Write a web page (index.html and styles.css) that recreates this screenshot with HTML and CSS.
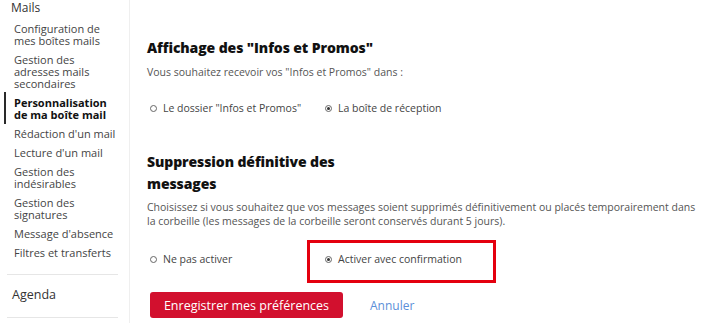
FILE: index.html
```html
<!DOCTYPE html>
<html lang="fr">
<head>
<meta charset="utf-8">
<title>Personnalisation de ma boîte mail</title>
<link rel="stylesheet" href="styles.css">
</head>
<body>
<div class="layout">
  <aside class="sidebar">
    <div class="group-title">Mails</div>
    <ul class="menu">
      <li>Configuration de mes boîtes mails</li>
      <li>Gestion des adresses mails secondaires</li>
      <li class="active">Personnalisation de ma boîte mail</li>
      <li>Rédaction d'un mail</li>
      <li>Lecture d'un mail</li>
      <li>Gestion des indésirables</li>
      <li>Gestion des signatures</li>
      <li>Message d'absence</li>
      <li>Filtres et transferts</li>
    </ul>
    <hr class="sep">
    <div class="group-title agenda">Agenda</div>
    <hr class="sep sep-last">
  </aside>
  <main class="content">
    <section class="pref">
      <h2 class="pref-title">Affichage des "Infos et Promos"</h2>
      <p class="pref-desc">Vous souhaitez recevoir vos "Infos et Promos" dans :</p>
      <div class="options">
        <label class="option"><span class="radio"></span>Le dossier "Infos et Promos"</label>
        <label class="option"><span class="radio checked"></span>La boîte de réception</label>
      </div>
    </section>
    <section class="pref pref-second">
      <h2 class="pref-title narrow">Suppression définitive des messages</h2>
      <p class="pref-desc">Choisissez si vous souhaitez que vos messages soient supprimés définitivement ou placés temporairement dans la corbeille (les messages de la corbeille seront conservés durant 5 jours).</p>
      <div class="options options-second">
        <label class="option"><span class="radio"></span>Ne pas activer</label>
        <label class="option highlighted"><span class="radio checked"></span>Activer avec confirmation</label>
      </div>
    </section>
    <div class="actions">
      <button class="btn-primary" type="button">Enregistrer mes préférences</button>
      <a class="link-cancel" href="#">Annuler</a>
    </div>
  </main>
</div>
</body>
</html>
```

FILE: styles.css
```css
* { box-sizing: border-box; }

html, body {
  margin: 0;
  padding: 0;
  background: #ffffff;
  overflow: hidden;
}

body {
  font-family: "Open Sans", "DejaVu Sans", sans-serif;
  color: #3a3a3a;
  width: 711px;
  height: 323px;
}

.layout {
  display: flex;
  height: 323px;
}

.sidebar {
  width: 130px;
  flex: 0 0 130px;
  border-right: 1px solid #efefef;
  padding: 1px 11px 0 7px;
}

.group-title {
  font-size: 12px;
  line-height: 14px;
  color: #333;
  padding-left: 4px;
}

.menu {
  list-style: none;
  margin: 8px 0 0 0;
  padding: 0 0 0 7px;
  display: flex;
  flex-direction: column;
  gap: 7px;
}

.menu li {
  font-size: 11px;
  line-height: 12px;
  color: #444;
  position: relative;
}

.menu li.active {
  font-weight: 700;
  color: #111;
}

.menu li.active::before {
  content: "";
  position: absolute;
  left: -10px;
  top: -5px;
  bottom: -3px;
  width: 2px;
  background: #2a2a2a;
}

.sep {
  border: 0;
  border-top: 1px solid #e6e6e6;
  margin: 15px 0 0 0;
}

.agenda {
  margin-top: 13px;
  font-size: 12.5px;
  padding-left: 5px;
}

.sep-last {
  margin-top: 15px;
}

.content {
  flex: 1;
  padding: 37px 14px 0 17px;
}

.pref-title {
  margin: 0;
  font-size: 14px;
  line-height: 22px;
  font-weight: 800;
  color: #111;
  letter-spacing: -0.1px;
}

.pref-title.narrow {
  max-width: 200px;
}

.pref-desc {
  margin: 6px 0 0 0;
  font-size: 10.5px;
  line-height: 14px;
  color: #555;
}

.pref-second {
  margin-top: 36px;
}

.pref-second .pref-desc {
  margin-top: 5px;
}

.options {
  display: grid;
  grid-template-columns: 175px auto;
  margin-top: 22px;
}

.options-second {
  margin-top: 24px;
}

.option {
  display: flex;
  align-items: center;
  gap: 6px;
  padding-left: 3px;
  font-size: 10.5px;
  line-height: 14px;
  color: #444;
  position: relative;
}

.radio {
  width: 7px;
  height: 7px;
  border: 1px solid #666;
  border-radius: 50%;
  display: inline-flex;
  align-items: center;
  justify-content: center;
  flex: 0 0 7px;
}

.radio.checked::after {
  content: "";
  width: 3px;
  height: 3px;
  border-radius: 50%;
  background: #333;
}

.highlighted::after {
  content: "";
  position: absolute;
  left: -15px;
  top: -12px;
  width: 183px;
  height: 37px;
  border: 3px solid #e4000f;
}

.actions {
  display: flex;
  align-items: center;
  gap: 27px;
  margin-top: 26px;
  padding-left: 3px;
}

.btn-primary {
  width: 193px;
  height: 26px;
  border: 0;
  border-radius: 3px;
  background: #d2102e;
  color: #fff;
  font-family: inherit;
  font-size: 12.5px;
  padding: 0;
}

.link-cancel {
  color: #5b8fd8;
  font-size: 12px;
  text-decoration: none;
}
```
